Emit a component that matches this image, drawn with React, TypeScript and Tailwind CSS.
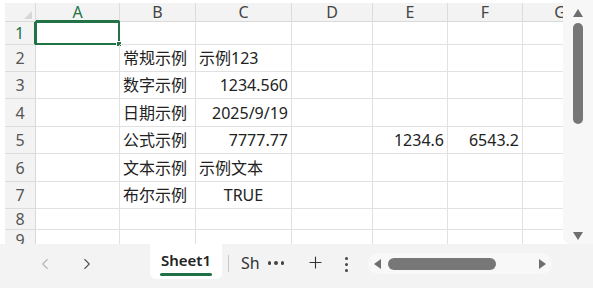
import React from 'react';
import { ChevronLeft, ChevronRight, Plus } from 'lucide-react';

type Cell = { text: string; align: string };

// data rows: index = row number, columns A..G
const DATA: Record<number, Record<string, Cell>> = {
  2: { B: { text: '常规示例', align: 'text-left' }, C: { text: '示例123', align: 'text-left' } },
  3: { B: { text: '数字示例', align: 'text-left' }, C: { text: '1234.560', align: 'text-right' } },
  4: { B: { text: '日期示例', align: 'text-left' }, C: { text: '2025/9/19', align: 'text-right' } },
  5: {
    B: { text: '公式示例', align: 'text-left' },
    C: { text: '7777.77', align: 'text-right' },
    E: { text: '1234.6', align: 'text-right' },
    F: { text: '6543.2', align: 'text-right' },
  },
  6: { B: { text: '文本示例', align: 'text-left' }, C: { text: '示例文本', align: 'text-left' } },
  7: { B: { text: '布尔示例', align: 'text-left' }, C: { text: 'TRUE', align: 'text-center' } },
};

const COLS = ['A', 'B', 'C', 'D', 'E', 'F', 'G'];
const ROWS = [1, 2, 3, 4, 5, 6, 7, 8, 9];

const headFont = { fontFamily: '"Noto Sans", "Open Sans", sans-serif' };
const cellFont = { fontFamily: '"Noto Sans", "Noto Sans CJK SC", sans-serif' };

const TriangleUp = () => (
  <svg width="10" height="8" viewBox="0 0 10 8"><path d="M5 0 L10 8 L0 8 Z" fill="#6e6e6e" /></svg>
);
const TriangleDown = () => (
  <svg width="10" height="8" viewBox="0 0 10 8"><path d="M0 0 L10 0 L5 8 Z" fill="#6e6e6e" /></svg>
);

const App: React.FC = () => {
  return (
    <div className="w-[593px] h-[288px] bg-white flex flex-col overflow-hidden text-[#222]">
      {/* sheet + vertical scrollbar */}
      <div className="flex h-[244px]">
        <div className="w-[563px] pt-[3px] pl-[5px] overflow-hidden">
          <div className="grid grid-cols-[31px_84px_76px_96px_81px_75px_75px_75px] grid-rows-[19px_23px_27px_27px_28px_27px_28px_27px_21px_21px]">
            {/* corner */}
            <div className="bg-[#f3f3f3] border-r border-b border-[#d9d9d9] flex items-end justify-end pr-[3px] pb-[2px]">
              <svg width="8" height="8" viewBox="0 0 8 8"><path d="M8 0 L8 8 L0 8 Z" fill="#d6d6d6" /></svg>
            </div>
            {COLS.map((c) => (
              <div
                key={c}
                style={headFont}
                className={`flex items-center justify-center text-[16px] leading-none bg-[#f3f3f3] border-r border-[#dcdcdc] ${
                  c === 'A' ? 'border-b-2 border-b-[#217346] text-[#217346] bg-[#ececec]' : 'border-b border-b-[#d9d9d9] text-[#444]'
                }`}
              >
                {c}
              </div>
            ))}
            {ROWS.map((r) => (
              <React.Fragment key={r}>
                <div
                  style={headFont}
                  className={`flex items-center justify-center text-[16px] leading-none bg-[#f3f3f3] border-b border-[#dcdcdc] ${
                    r === 1 ? 'border-r-2 border-r-[#217346] text-[#217346] bg-[#ececec]' : 'border-r border-r-[#d9d9d9] text-[#555]'
                  }`}
                >
                  {r}
                </div>
                {COLS.map((c) => {
                  const cell = DATA[r]?.[c];
                  return (
                    <div
                      key={c}
                      style={cellFont}
                      className="relative border-r border-b border-[#e1e1e1] px-[3px] flex items-center text-[16px] leading-none whitespace-nowrap"
                    >
                      {cell && <span className={`w-full ${cell.align}`}>{cell.text}</span>}
                      {r === 1 && c === 'A' && (
                        <div className="absolute -left-px -top-px -right-px -bottom-px border-2 border-[#217346]">
                          <div className="absolute -right-[4px] -bottom-[4px] w-[6px] h-[6px] bg-[#217346] border border-white" />
                        </div>
                      )}
                    </div>
                  );
                })}
              </React.Fragment>
            ))}
          </div>
        </div>
        {/* vertical scrollbar */}
        <div className="w-[30px] bg-[#f7f7f7] rounded-bl-[8px] flex flex-col items-center pt-[9px] pb-[4px] pr-[1px]">
          <TriangleUp />
          <div className="mt-[6px] w-[10px] h-[101px] rounded-full bg-[#777]" />
          <div className="flex-1" />
          <TriangleDown />
        </div>
      </div>

      {/* bottom bar */}
      <div className="flex-1 bg-[#f3f3f3] flex items-start">
        <div className="ml-[36px] mt-[11px] text-[#b5b5b5]">
          <ChevronLeft size={18} strokeWidth={1.5} />
        </div>
        <div className="ml-[24px] mt-[11px] text-[#555]">
          <ChevronRight size={18} strokeWidth={1.5} />
        </div>
        <div className="ml-[54px] w-[72px] h-[35px] bg-white rounded-b-[6px] flex flex-col items-center pt-[7px]">
          <span style={cellFont} className="text-[15px] leading-[18px] font-semibold text-[#222]">Sheet1</span>
          <div className="mt-[4px] w-[52px] h-[3px] bg-[#1e7145] rounded-full" />
        </div>
        <div className="ml-[6px] mt-[11px] w-px h-[17px] bg-[#c8c8c8]" />
        <span style={cellFont} className="ml-[12px] mt-[9px] text-[16px] leading-[20px] text-[#333]">Sh</span>
        <div className="ml-[8px] mt-[17px] flex gap-[3px]">
          <div className="w-[3.5px] h-[3.5px] rounded-full bg-[#444]" />
          <div className="w-[3.5px] h-[3.5px] rounded-full bg-[#444]" />
          <div className="w-[3.5px] h-[3.5px] rounded-full bg-[#444]" />
        </div>
        <div className="ml-[22px] mt-[9px] text-[#333]">
          <Plus size={19} strokeWidth={1.4} />
        </div>
        <div className="ml-[20px] mt-[13px] flex flex-col gap-[3px]">
          <div className="w-[3px] h-[3px] rounded-full bg-[#444]" />
          <div className="w-[3px] h-[3px] rounded-full bg-[#444]" />
          <div className="w-[3px] h-[3px] rounded-full bg-[#444]" />
        </div>
        <div className="ml-[20px] mt-[9px] w-[184px] h-[21px] rounded-full bg-[#f8f8f8] flex items-center pl-[6px] pr-[6px]">
          <svg width="7" height="10" viewBox="0 0 7 10"><path d="M7 0 L7 10 L0 5 Z" fill="#6e6e6e" /></svg>
          <div className="ml-[7px] w-[108px] h-[12px] rounded-full bg-[#777]" />
          <div className="flex-1" />
          <svg width="7" height="10" viewBox="0 0 7 10"><path d="M0 0 L7 5 L0 10 Z" fill="#6e6e6e" /></svg>
        </div>
      </div>
    </div>
  );
};

export default App;
